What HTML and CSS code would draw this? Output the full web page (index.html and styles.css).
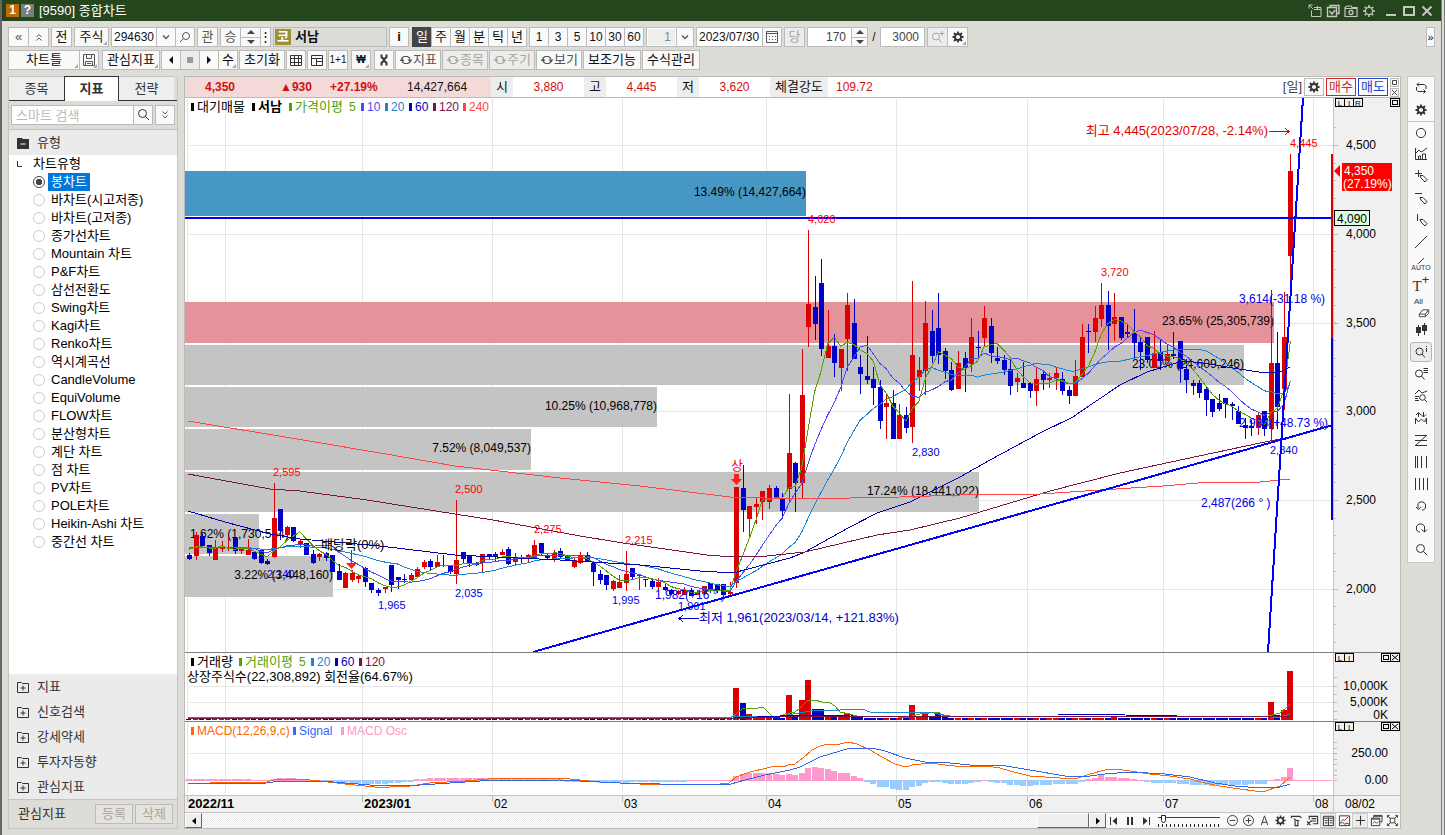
FILE: index.html
```html
<!DOCTYPE html>
<html lang="ko">
<head>
<meta charset="utf-8">
<title>[9590] 종합차트</title>
<link rel="stylesheet" href="styles.css">
</head>
<body>
<svg class="defs" aria-hidden="true">
  <symbol id="gear" viewBox="0 0 14 14"><circle cx="7" cy="7" r="3" fill="none" stroke="currentColor" stroke-width="1.800"/><path d="M7 1.500v2M7 10.500v2M1.500 7h2M10.500 7h2M3 3l1.500 1.500M9.500 9.500L11 11M11 3L9.500 4.500M4.500 9.500L3 11" stroke="currentColor" stroke-width="1.800"/></symbol>
  <symbol id="gear-thin" viewBox="0 0 14 14"><circle cx="7" cy="7" r="3.600" fill="none" stroke="currentColor" stroke-width="1.300"/><path d="M7 1v2M7 11v2M1 7h2M11 7h2M2.800 2.800l1.400 1.400M9.800 9.800l1.400 1.400M11.200 2.800L9.800 4.200M4.200 9.800l-1.400 1.400" stroke="currentColor" stroke-width="1.600"/></symbol>
  <symbol id="search" viewBox="0 0 14 14"><g fill="none" stroke="currentColor"><circle cx="6.500" cy="5.500" r="4"/><path d="M9.500 8.500l3.500 3.500"/></g></symbol>
  <symbol id="search-left" viewBox="0 0 14 14"><g fill="none" stroke="currentColor"><circle cx="8" cy="6" r="3.500"/><path d="M5.500 8.500L2 12"/></g></symbol>
  <symbol id="search-i" viewBox="0 0 14 14"><g fill="none" stroke="currentColor"><circle cx="5.500" cy="6.500" r="3.500"/><path d="M8 9l3 3.500M12.500 1v1M12.500 3v4"/></g></symbol>
  <symbol id="search-lines" viewBox="0 0 14 14"><g fill="none" stroke="currentColor"><circle cx="5" cy="6.500" r="3.500"/><path d="M7.500 9l3 3.500M9.500 1.500H14M9.500 3.500H14M9.500 5.500H14"/></g></symbol>
  <symbol id="search-plus" viewBox="0 0 14 14"><g fill="none" stroke="currentColor"><circle cx="5" cy="6.500" r="3.500"/><path d="M7.500 9l3 3.500M8.500 3.500h5M11 1v5"/></g></symbol>
  <symbol id="search-chart" viewBox="0 0 14 14"><g fill="none" stroke="currentColor"><path d="M1 5l4-4 3 3 5-2M1 7.500h4M1 9.500h3M1 11.500h4"/><circle cx="8.500" cy="8.500" r="2.800"/><path d="M10.500 10.500L13 13"/></g></symbol>
  <symbol id="cycle" viewBox="0 0 14 14"><path d="M5 1.500L3 3.500l2 2M3 3.500h7.500l1.500 1.500v3M9.500 8.500l2 2-2 2M11.500 10.500H4L2.500 9V6" fill="none" stroke="currentColor"/></symbol>
  <symbol id="sync" viewBox="0 0 14 14"><path d="M3 6V5l2-1.500h3.500L10.500 5v1.500M11 8v1l-2 1.500H5.500L3.500 9V8" fill="none" stroke="currentColor" stroke-width="1.200"/><path d="M0.500 8L3 5l2.500 3zM8.500 6.500h5L11 9.500z" fill="currentColor"/></symbol>
  <symbol id="circle" viewBox="0 0 14 14"><circle cx="7" cy="7" r="4.600" fill="none" stroke="currentColor"/></symbol>
  <symbol id="bars" viewBox="0 0 14 14"><path d="M1.500 1v11.500H13M2 6l3-3 2 2 2-1 4-3M4.500 12V9h2v3M8.500 12V7h3v5" fill="none" stroke="currentColor"/></symbol>
  <symbol id="pen-plus" viewBox="0 0 14 14"><path d="M4.500 1v7M1 4.500h7M6 6.500h3l4 4-2 2.500-4-4z" fill="none" stroke="currentColor"/></symbol>
  <symbol id="pen-h" viewBox="0 0 14 14"><path d="M1 2.500h7M6 6.500h3l4 4-2 2.500-4-4z" fill="none" stroke="currentColor"/></symbol>
  <symbol id="pen-v" viewBox="0 0 14 14"><path d="M3.500 1v7M6 6.500h3l4 4-2 2.500-4-4z" fill="none" stroke="currentColor"/></symbol>
  <symbol id="line" viewBox="0 0 14 14"><path d="M1 13L13 1" fill="none" stroke="currentColor"/></symbol>
  <symbol id="eraser" viewBox="0 0 14 14"><path d="M1.500 9.500l4-5h7v4l-4 4h-7zM1.500 9.500h7v3M8.500 9.500l4-5" fill="none" stroke="currentColor"/></symbol>
  <symbol id="candles" viewBox="0 0 14 14"><path d="M4.500 2v11M10.500 0v12" stroke="currentColor"/><path d="M2 4h5v6H2zM8 2h5v6H8z" fill="currentColor"/></symbol>
  <symbol id="arrows-chart" viewBox="0 0 14 14"><path d="M4.500 6V2M2 4l2.500-2.500L7 4M9.500 1v5M7 3.500L9.500 6 12 3.500M1.500 13V7l3 4 3-3 3 3 2-4v6" fill="none" stroke="currentColor"/></symbol>
  <symbol id="zig" viewBox="0 0 14 14"><path d="M1 2.500h12M1 7.500h12M1 12.500h12M12.500 2.500l-11 10" fill="none" stroke="currentColor"/></symbol>
  <symbol id="vlines-a" viewBox="0 0 14 14"><path d="M1.500 1v12M3.500 1v12M7.500 1v12M12.500 1v12" stroke="currentColor"/></symbol>
  <symbol id="vlines-b" viewBox="0 0 14 14"><path d="M1.500 1v12M5.500 1v12M9.500 1v12M13.500 1v12" stroke="currentColor"/></symbol>
  <symbol id="undo" viewBox="0 0 14 14"><path d="M4 9.500V4.500L6 3h3l2.500 2v4L9.500 11H8M2 8l2.500 2.500L7 8" fill="none" stroke="currentColor"/></symbol>
  <symbol id="redo" viewBox="0 0 14 14"><path d="M6 11H4.500L2.500 9V5L5 3h3l2.500 2v6M7.500 8.500L10.500 11 13 8.500" fill="none" stroke="currentColor"/></symbol>
  <symbol id="chev" viewBox="0 0 14 14"><path d="M4 5.500l3 3 3-3" fill="none" stroke="currentColor" stroke-width="1.300"/></symbol>
  <symbol id="save" viewBox="0 0 14 14"><path d="M1.500 1.500h11v11h-11zM4.500 1.500v4h5v-4M3.500 12.500v-4h7v4M5 10.500h4" fill="none" stroke="currentColor"/></symbol>
  <symbol id="grid" viewBox="0 0 14 14"><path d="M1.500 2.500h11v10h-11zM1 5.500h12M1 9.500h12M5.500 2v10M9.500 2v10" fill="none" stroke="currentColor"/></symbol>
  <symbol id="layout" viewBox="0 0 14 14"><path d="M1.500 2.500h11v10h-11zM1 5.500h12M6.500 5v7M6.500 8.500h6" fill="none" stroke="currentColor"/></symbol>
  <symbol id="calendar" viewBox="0 0 14 14"><path d="M1.500 1.500h11v11h-11zM1 3.500h12" fill="none" stroke="currentColor"/><path d="M4 6.500h7M4 9.500h7" stroke="currentColor" stroke-dasharray="1 2"/></symbol>
  <symbol id="tool" viewBox="0 0 14 14"><path d="M4.500 1.500v2.500L7 6.500 9.500 4V1.500M4.500 12.500V10L7 7.500 9.500 10v2.500M7 5v4" fill="none" stroke="currentColor" stroke-width="2"/></symbol>
  <symbol id="folder-open" viewBox="0 0 14 14"><path d="M1 2h5l1 1h6v10H1z" fill="#333"/><path d="M4.500 8h5" stroke="#fff"/></symbol>
  <symbol id="folder" viewBox="0 0 14 14"><path d="M1.500 2.500h4l1 1h6v9h-11zM4.500 8h5M7 5.500v5" fill="none" stroke="currentColor"/></symbol>
  <symbol id="pin-window" viewBox="0 0 14 14"><path d="M1 4.500V1h3.500M1 1l4 4M6 3.500h7v9H3.500V6.500M6 5.500h7M9.500 2v3" fill="none" stroke="currentColor"/></symbol>
  <symbol id="check-window" viewBox="0 0 14 14"><path d="M4 3V1.500h9v8h-2M1.500 3.500h9v9h-9zM3.500 7L6 10l3-4" fill="none" stroke="currentColor" stroke-width="1.400"/></symbol>
  <symbol id="camera" viewBox="0 0 14 14"><path d="M1 4.500V3.500L3 2h4l1 1.500h5v9H1zM1 4.500h12" fill="none" stroke="currentColor" stroke-width="1.200"/><circle cx="7" cy="8.500" r="2" fill="none" stroke="currentColor" stroke-width="1.300"/></symbol>
  <symbol id="minus-c" viewBox="0 0 14 14"><path d="M4 7h6" stroke="currentColor"/><circle cx="7" cy="7" r="5.400" fill="none" stroke="currentColor"/></symbol>
  <symbol id="plus-c" viewBox="0 0 14 14"><path d="M4 7h6M7 4v6" stroke="currentColor"/><circle cx="7" cy="7" r="5.400" fill="none" stroke="currentColor"/></symbol>
  <symbol id="compass" viewBox="0 0 14 14"><path d="M3.500 12L7 2l3.500 10M4.500 9h5" fill="none" stroke="currentColor"/></symbol>
  <symbol id="hammer" viewBox="0 0 14 14"><path d="M1.500 4.500v-2h9l2 2M4 5l3 2h3M5.500 7v5.500h3V7" fill="none" stroke="currentColor" stroke-width="1.200"/></symbol>
  <symbol id="table-pen" viewBox="0 0 14 14"><path d="M3.500 6V2.500h9v8h-5M6 5h5M6 7.500h5M1 12l5-5M1 8l4 4" fill="none" stroke="currentColor" stroke-width="1.200"/></symbol>
  <symbol id="list" viewBox="0 0 14 14"><path d="M1.500 2.500h11v10h-11zM1 4.500h12M7 4v8M3 7h3M3 9.500h3M8.500 7h3M8.500 9.500h3" fill="none" stroke="currentColor"/></symbol>
  <symbol id="chart-red" viewBox="0 0 14 14"><path d="M1.500 2h11v10.500h-11zM2 10l3-1 2 2 3-1 2 1" fill="none" stroke="#333"/><path d="M3 8l2-2 2 1 4-4" fill="none" stroke="#b22"/></symbol>
  <symbol id="cross" viewBox="0 0 14 14"><path d="M7 2v10M2 7h10" stroke="currentColor" stroke-width="1.200"/></symbol>
  <symbol id="windows" viewBox="0 0 14 14"><path d="M4 4V1.500h9v7h-2M1.500 4.500h9v8h-9zM4 2.500h9M1.500 5.500h9" fill="none" stroke="#333"/><path d="M3 10l2-2 2 2 2-2" fill="none" stroke="#b22"/></symbol>
  <symbol id="full" viewBox="0 0 14 14"><path d="M1.500 4V1.500H4M10 1.500h2.500V4M12.500 10v2.500H10M4 12.500H1.500V10M4.500 4.500h5v5h-5zM2 2l2.500 2.500M12 2L9.500 4.500M12 12L9.500 9.500M2 12l2.500-2.500" fill="none" stroke="currentColor"/></symbol>
</svg>

<div class="frame">
  <header class="title">
    <span class="badge num">1</span><span class="badge help">?</span>
    <h1>[9590] 종합차트</h1>
    <div class="title-tools">
      <button aria-label="분리"><svg><use href="#pin-window"/></svg></button>
      <button aria-label="선택"><svg><use href="#check-window"/></svg></button>
      <button aria-label="캡처"><svg><use href="#camera"/></svg></button>
      <button aria-label="설정"><svg><use href="#gear-thin"/></svg></button>
      <button class="win first" aria-label="최소화"><svg viewBox="0 0 14 14"><path d="M2 11h10" stroke="currentColor" stroke-width="2"/></svg></button>
      <button class="win" aria-label="최대화"><svg viewBox="0 0 14 14"><path d="M2 3h10v8H2z" fill="none" stroke="currentColor" stroke-width="2"/></svg></button>
      <button class="win" aria-label="닫기"><svg viewBox="0 0 14 14"><path d="M2.500 2.500l9 9M11.500 2.500l-9 9" stroke="currentColor" stroke-width="2"/></svg></button>
    </div>
  </header>

  <div class="bars">
    <div class="bar">
      <div class="set"><button class="b w21 dim">«</button><button class="b w21 dim"><svg viewBox="0 0 14 14"><path d="M4.500 7L7 4.500 9.500 7M4.500 10.500L7 8l2.500 2.500" fill="none" stroke="currentColor"/></svg></button></div>
      <button class="b w21">전</button>
      <button class="b w35 fold">주식</button>
      <div class="set"><input class="f w46" aria-label="종목코드" value="294630"><button class="b w20 dim" aria-label="목록"><svg><use href="#chev"/></svg></button><button class="b w20 dim" aria-label="찾기"><svg><use href="#search-left"/></svg></button></div>
      <button class="b w21 dim">관</button>
      <div class="set"><button class="b w21 dim">승</button><span class="spin w21"><button aria-label="이전 종목"></button><button class="dn" aria-label="다음 종목"></button></span><button class="b w10">⋮</button></div>
      <div class="name"><b class="mk">코</b><b>서남</b></div>
      <button class="b w20 info"><b>i</b></button>
      <div class="set period"><button class="b w20 on">일</button><button class="b w20">주</button><button class="b w20">월</button><button class="b w20">분</button><button class="b w20">틱</button><button class="b w20">년</button></div>
      <div class="set"><button class="b w20 n">1</button><button class="b w20 n">3</button><button class="b w20 n">5</button><button class="b w20 n">10</button><button class="b w20 n">30</button><button class="b w20 n">60</button></div>
      <div class="set"><input class="f w31 off r" aria-label="간격" value="1"><button class="b w18 dim" aria-label="간격 목록"><svg><use href="#chev"/></svg></button></div>
      <div class="set"><input class="f w67" aria-label="날짜" value="2023/07/30"><button class="b w20 dim" aria-label="달력"><svg><use href="#calendar"/></svg></button></div>
      <button class="b w21 muted">당</button>
      <div class="set"><input class="f w45 r" aria-label="봉 개수" value="170"><span class="spin w17"><button aria-label="늘리기"></button><button class="dn" aria-label="줄이기"></button></span><span class="slash">/</span><input class="f w45 r" aria-label="전체 봉" value="3000"></div>
      <div class="set"><button class="b w21 muted" aria-label="확대"><svg><use href="#search-plus"/></svg></button><button class="b w21 dark fold" aria-label="설정"><svg><use href="#gear"/></svg></button></div>
      <button class="b more">»</button>
    </div>
    <div class="bar tight">
      <div class="set"><button class="b w72 fold">차트틀</button><button class="b w20 dim fold" aria-label="저장"><svg><use href="#save"/></svg></button></div>
      <button class="b w59 fold gap">관심지표</button>
      <div class="set"><button class="b w20"><svg viewBox="0 0 14 14"><path d="M9 3v8L5 7z" fill="currentColor"/></svg></button><button class="b w20 muted"><svg viewBox="0 0 14 14"><path d="M4 4h6v6H4z" fill="#999"/></svg></button><button class="b w20"><svg viewBox="0 0 14 14"><path d="M5 3v8l4-4z" fill="currentColor"/></svg></button><button class="b w20 fold">수</button></div>
      <button class="b w46">초기화</button>
      <button class="b w20 dark" aria-label="격자"><svg><use href="#grid"/></svg></button>
      <button class="b w20 dark" aria-label="배치"><svg><use href="#layout"/></svg></button>
      <button class="b w20 tiny">1+1</button>
      <button class="b w20 fold gap2 tiny"><b>₩</b></button>
      <button class="b w20 dark gap2" aria-label="도구"><svg><use href="#tool"/></svg></button>
      <button class="b w47 dim"><svg><use href="#sync"/></svg>지표</button>
      <button class="b w47 muted"><svg><use href="#sync"/></svg>종목</button>
      <button class="b w47 muted"><svg><use href="#sync"/></svg>주기</button>
      <button class="b w47 dim"><svg><use href="#sync"/></svg>보기</button>
      <button class="b w59">보조기능</button>
      <button class="b w59">수식관리</button>
    </div>
  </div>

  <main>
    <aside class="side">
      <nav class="tabs"><button>종목</button><button class="on">지표</button><button>전략</button></nav>
      <div class="find"><input aria-label="스마트 검색" placeholder="스마트 검색"><button class="b w20 dark" aria-label="검색"><svg><use href="#search"/></svg></button><button class="b w20 dim" aria-label="펼치기"><svg viewBox="0 0 14 14"><path d="M4.500 3.500L7 6l2.500-2.500M4.500 7.500L7 10l2.500-2.500" fill="none" stroke="currentColor"/></svg></button></div>
      <button class="cat"><svg><use href="#folder-open"/></svg>유형</button>
      <fieldset class="tree">
        <legend><svg viewBox="0 0 6 6"><path d="M.5 0v5.500H5" fill="none" stroke="#333"/></svg>차트유형</legend>
        <label><input type="radio" name="t" checked><span>봉차트</span></label>
        <label><input type="radio" name="t"><span>바차트(시고저종)</span></label>
        <label><input type="radio" name="t"><span>바차트(고저종)</span></label>
        <label><input type="radio" name="t"><span>종가선차트</span></label>
        <label><input type="radio" name="t"><span>Mountain 차트</span></label>
        <label><input type="radio" name="t"><span>P&amp;F차트</span></label>
        <label><input type="radio" name="t"><span>삼선전환도</span></label>
        <label><input type="radio" name="t"><span>Swing차트</span></label>
        <label><input type="radio" name="t"><span>Kagi차트</span></label>
        <label><input type="radio" name="t"><span>Renko차트</span></label>
        <label><input type="radio" name="t"><span>역시계곡선</span></label>
        <label><input type="radio" name="t"><span>CandleVolume</span></label>
        <label><input type="radio" name="t"><span>EquiVolume</span></label>
        <label><input type="radio" name="t"><span>FLOW차트</span></label>
        <label><input type="radio" name="t"><span>분산형차트</span></label>
        <label><input type="radio" name="t"><span>계단 차트</span></label>
        <label><input type="radio" name="t"><span>점 차트</span></label>
        <label><input type="radio" name="t"><span>PV차트</span></label>
        <label><input type="radio" name="t"><span>POLE차트</span></label>
        <label><input type="radio" name="t"><span>Heikin-Ashi 차트</span></label>
        <label><input type="radio" name="t"><span>중간선 차트</span></label>
      </fieldset>
      <button class="cat"><svg><use href="#folder"/></svg>지표</button>
      <button class="cat"><svg><use href="#folder"/></svg>신호검색</button>
      <button class="cat"><svg><use href="#folder"/></svg>강세약세</button>
      <button class="cat"><svg><use href="#folder"/></svg>투자자동향</button>
      <button class="cat"><svg><use href="#folder"/></svg>관심지표</button>
      <div class="foot"><span>관심지표</span><button class="b muted">등록</button><button class="b muted">삭제</button></div>
    </aside>

    <section class="work">
      <div class="quote">
        <div class="hot"><b class="q1">4,350</b><b class="q2">▲930</b><b class="q3">+27.19%</b><span class="q4">14,427,664</span></div>
        <span class="k">시</span><span class="v">3,880</span>
        <span class="k">고</span><span class="v">4,445</span>
        <span class="k">저</span><span class="v">3,620</span>
        <span class="k wide">체결강도</span><span class="v last">109.72</span>
        <span class="day">[일]</span>
        <button class="b w20 dark" aria-label="차트 설정"><svg><use href="#gear"/></svg></button>
        <button class="trade buy">매수</button><button class="trade sell">매도</button>
        <span class="mini"><button aria-label="크게"><svg viewBox="0 0 7 7"><path d="M1.500 1.500h4v4h-4z" fill="none" stroke="currentColor"/></svg></button><button aria-label="닫기"><svg viewBox="0 0 7 7"><path d="M1 1l5 5M6 1L1 6" stroke="currentColor"/></svg></button></span>
      </div>
      <svg id="chart" class="chart" viewBox="185 98 1215 714" role="img" aria-label="서남 일봉 차트"></svg>
      <div class="bottom">
        <button class="sb" aria-label="왼쪽"><svg viewBox="0 0 14 14"><path d="M9 3.500v7L5 7z" fill="#000"/></svg></button>
        <div class="track"><div class="thumb"></div></div>
        <button class="sb" aria-label="오른쪽"><svg viewBox="0 0 14 14"><path d="M5 3.500v7L9 7z" fill="#000"/></svg></button>
        <div class="play">
          <button aria-label="처음"><svg viewBox="0 0 14 14"><path d="M3.500 3v8" stroke="currentColor"/><path d="M10 3v8L5.500 7z" fill="currentColor"/></svg></button>
          <button aria-label="일시정지"><svg viewBox="0 0 14 14"><path d="M4 3h2v8H4zM8 3h2v8H8z" fill="currentColor"/></svg></button>
          <button aria-label="끝"><svg viewBox="0 0 14 14"><path d="M10.500 3v8" stroke="currentColor"/><path d="M4 3v8l4.500-4z" fill="currentColor"/></svg></button>
        </div>
        <input class="speed" type="range" min="0" max="20" value="1" aria-label="속도">
        <div class="icons">
          <button aria-label="축소"><svg><use href="#minus-c"/></svg></button><button aria-label="확대"><svg><use href="#plus-c"/></svg></button><button aria-label="작도"><svg><use href="#compass"/></svg></button><button aria-label="설정"><svg><use href="#gear"/></svg></button><button aria-label="도구"><svg><use href="#hammer"/></svg></button><button aria-label="편집"><svg><use href="#table-pen"/></svg></button><button class="on" aria-label="정보"><svg><use href="#list"/></svg></button><button aria-label="차트"><svg><use href="#chart-red"/></svg></button><button class="on" aria-label="십자선"><svg><use href="#cross"/></svg></button><button aria-label="창"><svg><use href="#windows"/></svg></button><button aria-label="전체"><svg><use href="#full"/></svg></button>
        </div>
      </div>
    </section>

    <div class="rail-wrap">
      <nav class="rail">
        <button aria-label="새로고침"><svg><use href="#cycle"/></svg></button>
        <button aria-label="설정"><svg><use href="#gear"/></svg></button>
        <button class="sep" aria-label="원"><svg><use href="#circle"/></svg></button>
        <button aria-label="보조지표"><svg><use href="#bars"/></svg></button>
        <button aria-label="십자"><svg><use href="#pen-plus"/></svg></button>
        <button aria-label="수평선"><svg><use href="#pen-h"/></svg></button>
        <button aria-label="수직선"><svg><use href="#pen-v"/></svg></button>
        <button aria-label="추세선"><svg><use href="#line"/></svg></button>
        <button class="stack"><svg viewBox="0 0 14 7"><path d="M4 7l6-6" stroke="currentColor"/></svg>AUTO</button>
        <button class="serif">T<sup>+</sup></button>
        <button class="stack all">All<svg><use href="#eraser"/></svg></button>
        <button aria-label="봉"><svg><use href="#candles"/></svg></button>
        <button class="on" aria-label="정보"><svg><use href="#search-i"/></svg></button>
        <button aria-label="목록"><svg><use href="#search-lines"/></svg></button>
        <button aria-label="차트 찾기"><svg><use href="#search-chart"/></svg></button>
        <button aria-label="신호"><svg><use href="#arrows-chart"/></svg></button>
        <button aria-label="조정"><svg><use href="#zig"/></svg></button>
        <button aria-label="피보나치"><svg><use href="#vlines-a"/></svg></button>
        <button aria-label="등분"><svg><use href="#vlines-b"/></svg></button>
        <button aria-label="되돌리기"><svg><use href="#undo"/></svg></button>
        <button aria-label="다시"><svg><use href="#redo"/></svg></button>
        <button aria-label="찾기"><svg><use href="#search"/></svg></button>
      </nav>
    </div>
  </main>
</div>
<script src="chart.js"></script>
</body>
</html>
```
FILE: styles.css
```css
* { box-sizing: border-box; }
body { margin: 0; background: #dddcd6; color: #111; font: 12px/18px "Liberation Sans", "Noto Sans CJK KR", sans-serif; }
button, input { font: inherit; color: inherit; margin: 0; padding: 0; border-radius: 0; }
button { background: none; border: 0; display: flex; align-items: center; justify-content: center; white-space: nowrap; }
button svg { width: 14px; height: 14px; flex: none; }
.defs { position: absolute; width: 0; height: 0; }

.frame { display: flex; flex-direction: column; min-height: 100vh; border: solid #666; border-width: 0 0 1px 2px; border-right: 4px double #777; }

.title { display: flex; align-items: center; height: 21px; padding: 0 7px 0 4px; background: #25461c; color: #fff; }
.title h1 { margin: 0 0 0 3px; font-size: 13px; font-weight: 400; line-height: 20px; }
.badge { width: 13px; height: 13px; margin-right: 2px; line-height: 13px; text-align: center; font-weight: 700; }
.num { background: #c06a05; }
.help { background: #7d7d7d; }
.title-tools { display: flex; gap: 4px; margin-left: auto; color: #c4c8c0; }
.title-tools .win { width: 14px; }
.title-tools .first { margin-left: 4px; }

.bars { display: flex; flex-direction: column; gap: 3px; padding: 6px 6px; }
.bar { display: flex; gap: 2px; height: 20px; }
.bar.tight { gap: 1px; }
.set { display: flex; }
.set > * + * { margin-left: -1px; }
.b { position: relative; height: 20px; border: 1px solid #bbb; background: #f9f9f9; font-size: 13px; line-height: 18px; }
.dark { color: #333; }
.dim { color: #555; }
.muted { color: #aaa69c; background: #ececec; }
.n { font-size: 12px; }
.tiny { font-size: 10px; }
.fold::after { content: ""; position: absolute; right: 1px; bottom: 1px; border: 2px solid; border-color: transparent #aaa #aaa transparent; }
.f { height: 20px; padding: 0 2px; border: 1px solid #bbb; background: #fff; font-size: 12px; }
.f.r { text-align: right; padding-right: 5px; color: #444; }
.f.off { background: #eee; box-shadow: inset 0 0 0 1px #fff; color: #888; }
.w10 { width: 11px; } .w17 { width: 17px; } .w18 { width: 18px; } .w20 { width: 20px; } .w21 { width: 21px; }
.w31 { width: 31px; } .w35 { width: 35px; } .w45 { width: 45px; } .w46 { width: 46px; } .w47 { width: 46px; }
.w59 { width: 58px; } .w67 { width: 67px; } .w72 { width: 72px; }
.gap, .gap2 { margin-left: 2px; }
.spin { display: flex; flex-direction: column; border: 1px solid #bbb; background: #f9f9f9; }
.spin button { flex: 1; }
.spin button::before { content: ""; border: 4px solid transparent; border-top: 0; border-bottom: 4px solid #444; }
.spin .dn { border-top: 1px solid #bbb; }
.spin .dn::before { border-bottom: 0; border-top: 4px solid #444; }
.name { display: flex; align-items: center; gap: 4px; width: 114px; padding-left: 1px; border: 1px solid #bbb; font-size: 13px; }
.mk { width: 16px; height: 16px; background: #9c9233; color: #fff; line-height: 16px; text-align: center; }
.period { margin-left: 1px; }
.period .on { background: #444; border-color: #444; color: #fff; }
.slash { width: 14px; text-align: center; line-height: 20px; }
.more { width: 9px; margin-left: auto; font-size: 11px; }

main { display: flex; flex: 1; gap: 6px; align-items: stretch; padding: 0 6px 6px; }

.side { display: flex; flex-direction: column; width: 170px; flex: none; border: 1px solid #c4c4c4; border-width: 0 1px 1px; }
.tabs { display: flex; height: 25px; border-bottom: 1px solid #333; }
.tabs button { width: 55px; height: 24px; background: #eee; border-top: 1px solid #c4c4c4; font-size: 13px; color: #333; }
.tabs .on { height: 25px; background: #fff; border: 1px solid #333; border-bottom: 0; font-weight: 700; }
.find { display: flex; height: 29px; padding: 4px 2px; border-bottom: 1px solid #c4c4c4; }
.find input { flex: 1; min-width: 0; height: 20px; padding-left: 4px; border: 1px solid #bbb; background: #fff; font-size: 13px; }
.find input::placeholder { color: #bbb; }
.find .b + .b { margin-left: 2px; }
.find input + .b { margin-left: -1px; }
.cat { flex: none; justify-content: flex-start; gap: 7px; height: 25px; padding-left: 7px; background: #ebebeb; font-size: 13px; color: #333; }
.tree { flex: 1; margin: 0; padding: 0; border: 0; background: #fff; font-size: 13px; color: #000; }
.tree legend { float: left; display: flex; align-items: center; gap: 10px; width: 100%; height: 18px; padding: 0 0 0 8px; }
.tree legend svg { width: 6px; height: 6px; }
.tree label { clear: both; display: flex; align-items: center; gap: 3px; height: 18px; padding-left: 24px; }
.tree span { padding: 0 3px; height: 18px; line-height: 18px; }
.tree input { appearance: none; width: 12px; height: 12px; border: 1px solid #ccc; border-radius: 50%; background: #fff; }
.tree input:checked { border-color: #444; background: radial-gradient(circle, #444 0 3px, #fff 3px); }
.tree input:checked + span { background: #0078d7; color: #fff; }
.foot { display: flex; align-items: center; gap: 2px; height: 29px; padding: 0 4px 0 9px; border-top: 1px solid #c4c4c4; font-size: 13px; color: #333; }
.foot span { flex: 1; }
.foot .b { width: 38px; background: #e4e3de; }

.work { flex: 1; min-width: 0; border: 1px solid #bbb; }
.quote { display: flex; align-items: center; height: 21px; border-bottom: 1px solid #bbb; background: #fff; line-height: 20px; }
.hot { display: flex; height: 20px; width: 306px; padding-left: 20px; background: #f3d9d8; }
.hot b { color: #d01010; }
.q1 { width: 75px; } .q2 { width: 50px; } .q3 { width: 77px; }
.k { width: 22px; height: 20px; background: #ededed; text-align: center; font-size: 13px; }
.k.wide { width: 58px; }
.v { width: 71px; text-align: center; color: #d01010; }
.v.last { text-align: left; padding-left: 8px; }
.day { margin: 0 2px 0 auto; font-size: 13px; color: #444; }
.quote .b { height: 18px; margin-right: 2px; }
.trade { width: 30px; height: 18px; margin-right: 2px; border: 1px solid; font-size: 13px; background: #fafafa; }
.buy { color: #cc2a2a; } .sell { color: #2244cc; }
.mini { display: flex; flex-direction: column; gap: 1px; margin-right: 1px; color: #444; }
.mini button { width: 9px; height: 9px; border: 1px solid #bbb; background: #f9f9f9; }
.mini svg { width: 7px; height: 7px; }

.chart { display: block; width: 100%; height: auto; background: #fff; font-family: "Liberation Sans", "Noto Sans CJK KR", sans-serif; }
.chart line, .chart rect, .chart .thin { shape-rendering: crispEdges; }
.chart text { font-size: 12px; }
.chart .ko { font-size: 13px; }
.chart .bold { font-weight: 700; }
.chart .small { font-size: 11px; }
.chart .tag { font-size: 8px; }

.bottom { display: flex; height: 16px; border-top: 1px solid #c4c4c4; background: #f9f9f9; }
.bottom button { height: 15px; }
.bottom .sb { width: 17px; border: 1px solid #fff; border-right-color: #666; border-bottom-color: #666; background: #eee; }
.track { flex: 1; display: flex; justify-content: flex-end; background: repeating-conic-gradient(#eaeaea 0 25%, #fff 0 50%) 0 0 / 2px 2px; }
.thumb { width: 52px; border: 1px solid #fff; border-right-color: #666; border-bottom-color: #666; background: #eee; }
.play { display: flex; }
.play button { width: 16px; color: #333; }
.speed { appearance: none; width: 62px; height: 15px; margin: 0 4px; background: linear-gradient(#444, #444) 0 4px / 100% 1px no-repeat, repeating-linear-gradient(90deg, #222 0 1px, transparent 1px 4px) 0 11px / 100% 3px no-repeat; }
.speed::-webkit-slider-thumb { appearance: none; width: 5px; height: 8px; margin-bottom: 4px; border: 1px solid #222; background: #fff; border-radius: 0 0 3px 3px; }
.icons { display: flex; }
.icons button { width: 16px; color: #333; }
.icons svg { width: 13px; height: 13px; }
.icons .on { background: #ececec; border: 1px solid #ccc; }

.rail-wrap { width: 28px; flex: none; }
.rail { display: flex; flex-direction: column; border: 1px solid #c8c8c8; background: #fafafa; color: #333; padding-bottom: 1px; }
.rail button { height: 22px; }
.rail .sep { border-top: 1px solid #c8c8c8; }
.rail .on { height: 20px; margin: 1px 2px; border: 1px solid #b5b5b5; border-radius: 3px; background: #ececec; }
.rail .stack { flex-direction: column; font-size: 7px; line-height: 8px; }
.rail .stack svg { height: 7px; }
.rail .all { align-items: flex-start; padding-left: 6px; font-size: 8px; }
.rail .all svg { height: 12px; margin-left: 3px; }
.rail .serif { font: 15px/20px "Liberation Serif", serif; }
.rail sup { font: 13px/10px "Liberation Sans", sans-serif; align-self: flex-start; }
```
FILE: chart.js
```js
const svg = document.getElementById("chart");
const NS = "http://www.w3.org/2000/svg";
const X = i => 189 + 6.517 * i;
const RED = "#dd0000", BLUE = "#0000c8";

function el(tag, attrs, text) {
  const n = document.createElementNS(NS, tag);
  for (const k in attrs) n.setAttribute(k, attrs[k]);
  if (text !== undefined) n.textContent = text;
  svg.appendChild(n);
  return n;
}
const rect = (x, y, w, h, fill, stroke) => el("rect", { x, y, width: w, height: h, fill, ...(stroke ? { stroke } : {}) });
const line = (x1, y1, x2, y2, stroke, w = 1) => el("line", { x1, y1, x2, y2, stroke, "stroke-width": w });
const text = (x, y, s, fill = "#000", cls = "", anchor = "start") => el("text", { x, y, fill, class: cls, "text-anchor": anchor }, s);
const poly = (pts, stroke, w = 1) => el("polyline", { points: pts, fill: "none", stroke, "stroke-width": w, class: "thin" });

/* high, body top, body bottom, low, direction */
const candles = `553 555 559 560 b|532 535 556 560 r|534 536 546 548 b|545 545 553 556 b|540 548 560 560 r|541 547 549 552 r|537 547 548 551 r|538 538 551 554 b|547 548 551 554 r|539 550 555 555 r
551 552 559 560 b|550 550 563 564 b|559 561 564 565 b|483 518 557 558 r|509 509 531 540 b|526 527 535 540 r|527 527 541 542 b|539 541 544 548 r|543 543 555 555 b|550 554 563 564 b
553 554 557 561 r|552 553 558 561 b|555 555 572 572 b|564 571 580 580 b|572 573 588 588 r|570 573 580 582 r|574 576 579 583 r|567 568 582 587 b|583 583 590 593 b|588 590 593 596 b
587 587 589 593 r|565 565 585 592 b|577 577 580 589 b|574 579 580 583 b|573 575 580 581 r|567 569 577 577 r|560 562 567 569 r|559 561 567 570 b|555 562 567 567 r|555 565 566 567 b
565 566 572 574 b|500 560 574 584 r|552 552 559 563 b|555 556 563 567 b|562 563 565 566 b|554 554 563 572 r|554 554 557 559 b|552 554 557 562 b|549 552 555 555 r|547 549 564 565 b
553 557 562 565 r|555 557 559 563 b|554 555 558 563 r|540 545 558 558 r|543 543 553 555 b|553 556 558 560 b|550 553 559 562 r|548 551 557 558 b|555 556 560 561 b|558 560 567 568 r
552 556 563 564 r|552 555 561 561 b|562 563 572 586 b|570 574 580 584 b|575 575 585 590 b|580 581 589 591 r|575 582 588 588 r|551 574 583 591 r|568 568 577 579 b|574 575 576 590 r
579 579 580 587 b|580 581 587 589 b|578 582 587 590 r|584 587 590 591 b|589 590 594 595 b|590 591 594 595 r|587 590 595 595 r|588 590 596 596 b|590 592 595 595 r|586 586 594 594 r
583 583 589 593 b|584 584 591 593 b|584 584 595 595 b|582 592 594 596 r|487 487 583 588 r|465 488 510 532 b|506 506 519 537 r|497 504 507 524 r|491 491 502 520 r|485 488 502 509 r
486 488 498 499 b|493 498 511 519 b|394 453 489 503 r|462 463 483 512 b|349 395 483 499 r|230 304 327 347 r|276 307 324 340 b|259 283 349 356 b|310 346 358 358 r|334 346 363 377 b
349 349 368 391 r|293 305 339 371 r|299 323 359 359 b|355 367 374 394 b|336 376 380 384 b|367 379 388 405 b|380 387 421 429 b|393 403 407 439 r|390 403 439 439 b|404 415 439 439 r
407 415 428 433 b|281 355 427 443 r|357 370 377 391 r|301 323 371 395 r|310 331 356 363 b|293 328 355 364 b|348 351 371 379 b|362 370 390 391 b|351 363 389 389 r|352 358 368 392 b
318 337 364 372 r|331 347 348 359 b|306 318 338 346 r|318 326 353 363 b|347 358 361 364 b|355 360 370 375 b|358 369 386 395 b|373 378 382 392 r|362 383 388 388 b|383 383 391 398 b
368 379 391 406 r|370 374 380 390 b|373 378 380 388 r|367 373 378 390 r|372 379 391 395 b|386 390 396 404 b|360 376 396 396 r|324 337 377 377 r|324 331 332 353 b|306 318 332 342 r
283 305 319 327 r|291 305 326 350 b|293 317 324 341 r|317 317 338 340 b|323 332 334 337 b|309 333 343 358 b|338 342 352 370 b|337 337 360 363 b|331 353 368 368 r|340 352 361 370 b
344 354 361 361 r|332 354 356 359 b|341 341 369 383 b|359 369 380 393 b|380 383 386 395 b|380 383 393 398 b|386 389 400 416 b|399 399 412 417 b|394 403 409 411 b|398 398 404 418 b
402 404 406 420 b|406 411 424 424 b|418 425 428 439 b|420 426 428 436 b|412 415 428 435 r|411 411 429 436 b|290 363 429 441 r|332 363 407 429 b|292 337 389 410 r|154 171 256 283 r`
  .split(/[|\n]/).map(s => { const p = s.trim().split(" "); return [+p[0], +p[1], +p[2], +p[3], p[4]]; });

/* panel backgrounds and grid */
rect(1334, 98, 66, 714, "#f0f0f0");
rect(185, 795, 1215, 17, "#f0f0f0");
const months = [187, 225, 362, 492, 622, 766, 896, 1027, 1163, 1313];
months.forEach(x => rect(x, 99, 1, 694, "#e6e6e6"));
[145, 234, 323, 411, 500, 589, 686, 702, 753].forEach(y => rect(187, y, 1147, 1, "#e6e6e6"));

/* volume profile */
[[171, 45, 806, "#4797c5"], [302, 41, 1274, "#e5939a"], [345, 40, 1244, "#c4c4c4"], [387, 40, 657, "#c4c4c4"], [429, 41, 531, "#c4c4c4"], [472, 40, 979, "#c4c4c4"], [514, 40, 259, "#c4c4c4"], [556, 41, 333, "#c4c4c4"]]
  .forEach(([y, h, x, c]) => rect(185, y, x - 185, h, c));

/* labels under the candles */
text(806, 196, "13.49% (14,427,664)", "#000", "", "end");
text(1274, 325, "23.65% (25,305,739)", "#000", "", "end");
text(1244, 368, "23.00% (24,609,246)", "#000", "", "end");
text(657, 410, "10.25% (10,968,778)", "#000", "", "end");
text(531, 452, "7.52% (8,049,537)", "#000", "", "end");
text(979, 495, "17.24% (18,441,022)", "#000", "", "end");
text(190, 538, "1.62% (1,730,554)");
text(333, 579, "3.22% (3,448,160)", "#000", "", "end");

candles.forEach(([h, t, b, l, d], i) => {
  const x = Math.round(X(i)), c = d === "r" ? RED : BLUE;
  rect(x, h, 1, l - h, c);
  rect(x - 2, t, 5, Math.max(1, b - t), c);
});

/* short moving averages come from the closes, the long ones are given */
const closes = Array(20).fill(547).concat(candles.map(c => c[4] === "r" ? c[1] : c[2]));
function average(n, color) {
  poly(candles.map((_, i) => {
    const w = closes.slice(i + 21 - n, i + 21);
    return X(i).toFixed(1) + "," + (w.reduce((a, b) => a + b) / n).toFixed(1);
  }).join(" "), color);
}
average(20, "#1a86d0");
average(10, "#4b4bf5");
average(5, "#55a000");
poly("188,511 225,522 270,534 300,539 380,546 455,555 560,560 640,565 700,571 733,573 767,564 790,558 805,552 850,527 877,513 910,502 960,477 990,460 1040,433 1073,417 1080,412 1120,385 1147,372 1183,361 1203,363 1233,368 1265,373 1280,372 1290,367", "#0000b4");
poly("188,474 270,489 300,491 367,500 455,514 493,520 580,536 623,543 707,555 733,557 767,556 805,552 877,535 910,530 960,518 1050,491 1120,473 1185,459 1260,443 1290,437", "#781446");
poly("188,421 303,440 380,453 455,466 560,478 640,486 730,497 800,499 900,497 960,495 1040,494 1100,490 1163,486 1210,482 1260,482 1290,479", "#ff4646");

/* drawn lines */
rect(185, 217, 1149, 2, "#0000ff");
poly("533,652 1333,425", "#0000ff", 2);
poly("1303,98 1268,652", "#0000ff", 2);
rect(1331, 154, 3, 184, RED);
rect(1331, 338, 3, 182, BLUE);

/* swing labels */
const hi = "#ff0000", lo = "#0000e6";
[[273, 476, "2,595"], [455, 493, "2,500"], [534, 533, "2,275"], [625, 544, "2,215"], [808, 223, "4,020"], [1101, 276, "3,720"], [1290, 147, "4,445"]]
  .forEach(([x, y, s]) => text(x, y, s, hi, "small"));
[[267, 578, "2,140"], [378, 609, "1,965"], [455, 597, "2,035"], [612, 604, "1,995"], [678, 610, "1,961"], [912, 456, "2,830"], [1270, 454, "2,840"]]
  .forEach(([x, y, s]) => text(x, y, s, lo, "small"));
text(655, 599, "1,982(+16 ° )", lo);
text(1239, 303, "3,614(-31.18 %)", lo);
text(1239, 427, "2,988(+48.73 %)", lo);
text(1201, 507, "2,487(266 ° )", lo);
text(1268, 135, "최고 4,445(2023/07/28, -2.14%)", "#dd0000", "ko", "end");
line(1269, 131.5, 1289, 131.5, "#dd0000");
poly("1285,128 1289,131.5 1285,135", "#dd0000");
line(679, 618.5, 699, 618.5, "#0000c8");
poly("683,615 679,618.5 683,622", "#0000c8");
text(699, 622, "최저 1,961(2023/03/14, +121.83%)", "#0000c8", "ko");
text(321, 549, "배당락(0%)", "#000", "ko");
rect(351, 550, 1, 13, hi);
el("path", { d: "M346 563h11l-5.500 6z", fill: "#ff1e1e" });
text(737, 470, "상", hi, "ko", "middle");
el("path", { d: "M734 474h5v5h3l-5.500 6-5.500-6h3z", fill: "#ff1e1e" });

/* legends: mark x, label, colour, extra class */
function legend(y, items) {
  items.forEach(([x, s, c, cls = ""]) => { rect(x, y - 8, 3, 8, c); text(x + 6, y, s, c, cls); });
}
legend(111, [[191, "대기매물", "#000", "ko"], [252, "서남", "#000", "ko bold"], [289, "가격이평", "#55a000", "ko"], [361, "10", "#4b4bf5"], [385, "20", "#1a86d0"], [409, "60", "#0000b4"], [433, "120", "#781446"], [463, "240", "#ff4646"]]);
text(349, 111, "5", "#55a000");

/* volume panel */
const special = { 13: 3, 41: 3, 84: 32, 85: 17, 86: 6, 87: 3, 92: 25, 93: 4, 94: 20, 95: 40, 96: 11, 97: 11, 98: 5, 99: 4, 100: 5, 101: 7, 102: 5, 103: 3, 111: 15, 112: 3, 113: 7, 114: 3, 115: 7, 116: 3, 142: 3, 166: 18, 167: 5, 168: 10, 169: 49 };
candles.forEach((c, i) => {
  const h = special[i] || (i > 84 ? 2 : 1);
  rect(Math.round(X(i)) - 3, 720 - h, i > 83 ? 6 : 5, h, c[4] === "r" ? RED : BLUE);
});
poly("188,718 731,718 742,709 758,708 763,707 772,716 780,717 785,714 795,712 800,708 807,701 815,700 822,702 830,703 835,706 840,712 850,714 860,717 890,716 905,718 920,714 938,712 945,717 1268,716 1280,713 1286,708 1290,704", "#55a000");
poly("188,718 731,717 780,716 800,713 810,711 840,710 845,709 862,709 870,712 930,712 938,714 950,716 1020,717 1280,717 1290,714", "#1a86d0");
poly("188,718 735,718 780,716 850,715 1058,715 1060,714 1123,714 1125,715 1177,716 1290,716", "#0000b4");
poly("188,718.500 735,718.500 780,717 950,716 1290,717", "#781446");
legend(666, [[191, "거래량", "#000", "ko"], [239, "거래이평", "#55a000", "ko"], [311, "20", "#1a86d0"], [335, "60", "#0000b4"], [359, "120", "#781446"]]);
text(299, 666, "5", "#55a000");
text(187, 681, "상장주식수(22,308,892) 회전율(64.67%)", "#000", "ko");

/* MACD panel */
const osc = [1, 1, 1, 1, 1, 1, 1, 1, 1, 1, 0, 0, 0, 1, 2, 2, 2, 1, 1, 0, 0, -1, -1, -2, -2, -2, -3, -3, -3, -3, -3, -2, -2, -1, -1, 1, 1, 2, 2, 2, 2, 2, 2, 2, 2, 2, 2, 2, 2, 2, 2, 1, 1, 1, 1, 1, 1, 1, -1, -1, -1, -1, -1, -2, -2, -2, -2, -2, -1, -1, -1, -1, -1, -1, -1, -1, -1, 0, 0, 0, 0, 0, 0, 0,
  4, 6, 7, 7, 7, 7, 6, 5, 6, 5, 7, 12, 13, 12, 11, 9, 7, 7, 4, 2, -1, -3, -6, -6, -8, -9, -9, -6, -5, -2, -1, -1, -2, -3, -3, -3, -2, -1, 0, -1, -2, -2, -4, -4, -5, -5, -4, -4, -4, -3, -3, -3, -3, -1, 1, 2, 5, 3, 3, 2, 2, 1, 0, -1, -2, -2, -2, -2, -3, -3, -4, -4, -4, -5, -4, -4, -4, -4, -4, -3, -3, -3, 0, 1, 3, 12];
rect(185, 780, 1147, 1, "#ff99cc");
osc.forEach((v, i) => {
  if (v) rect(Math.round(X(i)) - 3, v > 0 ? 780 - v : 780, 6, Math.abs(v) + (v < 0 ? 1 : 0), v > 0 ? "#ff99cc" : "#99ccff");
});
poly("188,783 210,783 230,782 267,782 277,779 300,779 320,781 345,784 375,787 390,787 410,786 430,783 465,781 500,778 560,778 600,782 640,784 720,784 729,783 736,777 750,772 767,768 775,766 783,767 788,765 795,764 803,758 812,750 820,746 828,744 840,744 848,742 857,744 870,750 882,757 895,764 906,767 912,765 930,763 945,765 965,767 985,766 1000,768 1010,771 1030,776 1060,778 1075,779 1090,774 1105,770 1115,769 1130,771 1150,774 1170,776 1190,779 1205,783 1220,786 1240,789 1255,791 1266,791 1280,786 1287,780 1290,777", "#ff6600");
poly("188,784 267,783 280,781 320,781 370,785 420,785 450,783 480,781 560,780 620,783 660,784 731,784 745,780 765,775 790,770 800,767 820,757 840,751 850,748 872,748 885,751 905,758 925,762 940,762 970,765 1000,765 1030,770 1065,776 1090,776 1105,774 1130,772 1165,774 1190,777 1215,783 1235,786 1260,788 1280,787 1290,784", "#3366ee");
legend(735, [[191, "MACD(12,26,9,c)", "#ff6600"], [293, "Signal", "#3366ff"], [341, "MACD Osc", "#ff99cc"]]);

/* separators and axes */
rect(1333, 98, 1, 714, "#c4c4c4");
rect(185, 652, 1215, 1, "#808080");
rect(185, 721, 1215, 1, "#808080");
rect(185, 795, 1215, 1, "#c0c0c0");
for (let y = 127; y < 650; y += 17.75) rect(1334, Math.round(y), 2, 1, "#c0c0c0");
[[145, "4,500"], [234, "4,000"], [323, "3,500"], [411, "3,000"], [500, "2,500"], [589, "2,000"]]
  .forEach(([y, s]) => { rect(1334, y, 4, 1, "#bbb"); text(1346, y + 4, s); });
[[690, "10,000K"], [706, "5,000K"], [719, "0K"], [757, "250.00"], [784, "0.00"]].forEach(([y, s]) => text(1388, y, s, "#000", "", "end"));
[677, 686, 694, 702, 711, 719, 742, 748, 753, 759, 764, 770, 775, 780].forEach(y => rect(1334, y, 3, 1, "#bbb"));
[187, 362, 492, 622, 766, 896, 1027, 1163, 1313].forEach(x => rect(x, 796, 1, 6, "#bbb"));
[[188, "2022/11", "bold ko"], [364, "2023/01", "bold ko"], [494, "02"], [624, "03"], [768, "04"], [898, "05"], [1029, "06"], [1165, "07"], [1315, "08"], [1345, "08/02"]]
  .forEach(([x, s, cls = ""]) => text(x, 808, s, "#000", cls));

/* price tags */
el("path", { d: "M1334 171l6-6v12z", fill: "#ff0000" });
rect(1342, 163, 50, 28, "#ff0000");
text(1344, 175, "4,350", "#fff");
text(1343, 188, "(27.19%)", "#fff");
rect(1334.5, 210.5, 35, 15, "#e0ffe0", "#000");
text(1337, 223, "4,090");

/* panel buttons */
function tags(y, list) {
  list.forEach(([x, s]) => {
    rect(x + .5, y + .5, 9, 8, "#f0f0f0", "#000");
    if (s === "□") rect(x + 2.5, y + 2.5, 5, 4, "none", "#000");
    else if (s === "×") el("path", { d: `M${x + 2} ${y + 2}l6 5m0-5l-6 5`, stroke: "#000" });
    else text(x + 5, y + 8, s, "#000", "tag", "middle");
  });
}
tags(98, [[1335, "L"], [1344, "I"], [1353, "R"], [1390, "□"]]);
tags(653, [[1335, "L"], [1344, "I"], [1381, "□"], [1390, "×"]]);
tags(722, [[1335, "L"], [1344, "I"], [1381, "□"], [1390, "×"]]);
```
